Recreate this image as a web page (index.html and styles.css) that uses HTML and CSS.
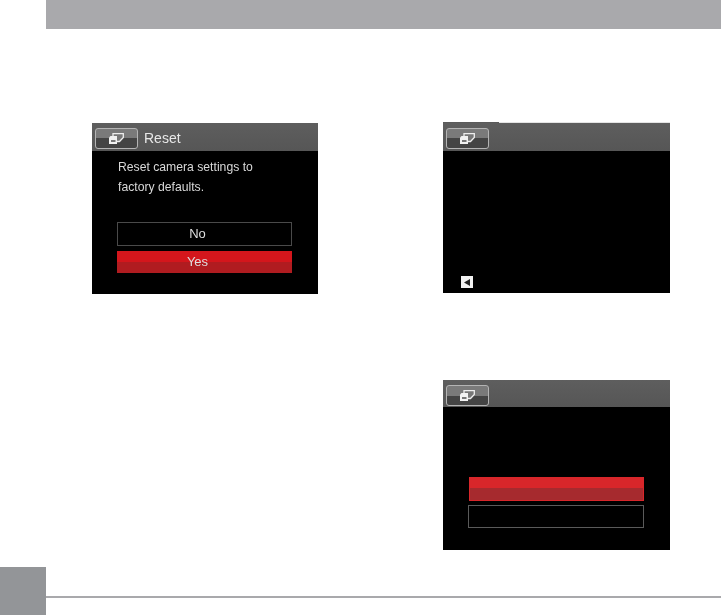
FILE: index.html
```html
<!DOCTYPE html>
<html lang="en">
<head>
    <meta charset="UTF-8">
    <meta name="viewport" content="width=device-width, initial-scale=1.0">
    <title>Reset</title>
    <link rel="stylesheet" href="styles.css">
</head>
<body>

<div class="top-bar"></div>

<div class="columns">
    <div class="column">
        <div class="screen screen-reset">
            <div class="screen-head">
                <div class="mode-btn">
                    <svg class="mode-icon" viewBox="0 0 15 11"><path d="M4 .7H14.3V4.5L10.5 8.5H4Z" fill="#777" stroke="#eee" stroke-width="1.3"/><path d="M1.5 3H8V11H0V4.5Z" fill="#f2f2f2"/><path d="M2 7H6.5V9H2Z" fill="#777"/></svg>
                </div>
                <span class="head-title">Reset</span>
            </div>
            <div class="screen-text">Reset camera settings to<br>factory defaults.</div>
            <div class="option option-no">No</div>
            <div class="option option-yes">Yes</div>
        </div>
    </div>

    <div class="column column-right">
        <div class="screen screen-blank">
            <div class="screen-head">
                <div class="mode-btn">
                    <svg class="mode-icon" viewBox="0 0 15 11"><path d="M4 .7H14.3V4.5L10.5 8.5H4Z" fill="#777" stroke="#eee" stroke-width="1.3"/><path d="M1.5 3H8V11H0V4.5Z" fill="#f2f2f2"/><path d="M2 7H6.5V9H2Z" fill="#777"/></svg>
                </div>
            </div>
            <div class="back-key">
                <svg class="back-arrow" viewBox="0 0 6 7"><path d="M0 3.5L6 0V7Z" fill="#222"/></svg>
            </div>
        </div>

        <div class="screen screen-confirm">
            <div class="screen-head">
                <div class="mode-btn">
                    <svg class="mode-icon" viewBox="0 0 15 11"><path d="M4 .7H14.3V4.5L10.5 8.5H4Z" fill="#777" stroke="#eee" stroke-width="1.3"/><path d="M1.5 3H8V11H0V4.5Z" fill="#f2f2f2"/><path d="M2 7H6.5V9H2Z" fill="#777"/></svg>
                </div>
            </div>
            <div class="bar bar-red"></div>
            <div class="bar bar-empty"></div>
        </div>
    </div>
</div>

<div class="footer">
    <div class="page-tab"></div>
    <div class="footer-line"></div>
</div>

</body>
</html>
```

FILE: styles.css
```css
html, body {
    margin: 0;
    padding: 0;
}
body {
    width: 721px;
    height: 615px;
    overflow: hidden;
    background-color: #fff;
    font-family: "Liberation Sans", Arial, sans-serif;
    display: flex;
    flex-direction: column;
}
.top-bar {
    height: 29px;
    margin-left: 46px;
    background-color: #a9a9ac;
}
.columns {
    flex: 1;
    display: flex;
    padding-left: 92px;
    gap: 125px;
}
.column {
    width: 226px;
    padding-top: 94px;
}
.column-right {
    width: 227px;
    padding-top: 93px;
}
.screen {
    height: 171px;
    background-color: #000;
    box-sizing: border-box;
}
.screen-confirm {
    height: 170px;
    margin-top: 87px;
}
.screen-head {
    height: 28px;
    box-sizing: border-box;
    padding: 5px 0 0 3px;
    display: flex;
    align-items: flex-start;
    background: linear-gradient(#5e5e5e, #565656);
}
.screen-blank .screen-head {
    height: 29px;
    padding-top: 6px;
    background: linear-gradient(#5a5a5a, #5a5a5a) 0 0 / 56px 1px no-repeat, linear-gradient(#e4e4e4 1px, #5e5e5e 1px, #565656);
}
.mode-btn {
    width: 43px;
    height: 21px;
    box-sizing: border-box;
    border: 1px solid #b4b4b4;
    border-radius: 3px;
    background: linear-gradient(#7a7a7a 50%, #444 50%);
    display: flex;
    justify-content: center;
    align-items: center;
}
.mode-icon {
    width: 15px;
    height: 11px;
}
.head-title {
    margin-left: 6px;
    margin-top: 2px;
    font-size: 14px;
    color: #e8e8e8;
    filter: blur(0.5px);
}
.screen-text {
    margin: 6px 0 0 26px;
    font-size: 12.2px;
    line-height: 20px;
    color: #d8d8d8;
    filter: blur(0.5px);
}
.option {
    width: 175px;
    margin-left: 25px;
    padding-right: 14px;
    box-sizing: border-box;
    text-align: center;
    font-size: 13px;
    color: #dedede;
}
.option-no {
    height: 24px;
    margin-top: 25px;
    line-height: 22px;
    border: 1px solid #4a4a4a;
    filter: blur(0.4px);
}
.option-yes {
    height: 22px;
    margin-top: 5px;
    line-height: 22px;
    background: linear-gradient(#d4161c 50%, #b01c20 50%);
    filter: blur(0.4px);
}
.back-key {
    width: 12px;
    height: 12px;
    margin: 125px 0 0 18px;
    background-color: #f2f2f2;
    display: flex;
    justify-content: center;
    align-items: center;
}
.back-arrow {
    width: 6px;
    height: 7px;
}
.bar {
    box-sizing: border-box;
    margin-left: 25px;
    width: 176px;
}
.bar-red {
    width: 175px;
    margin-left: 26px;
    height: 24px;
    margin-top: 70px;
    border: 1px solid #d8262a;
    background: linear-gradient(#d8262a 47%, #a62a2e 47%);
}
.bar-empty {
    height: 23px;
    margin-top: 4px;
    border: 1px solid #5a5a5a;
}
.screen-confirm .screen-head {
    height: 27px;
}
.footer {
    height: 48px;
    display: flex;
    align-items: flex-start;
}
.page-tab {
    width: 46px;
    height: 48px;
    background-color: #939598;
}
.footer-line {
    flex: 1;
    height: 2px;
    margin-top: 29px;
    background-color: #a9a9ac;
}
```
